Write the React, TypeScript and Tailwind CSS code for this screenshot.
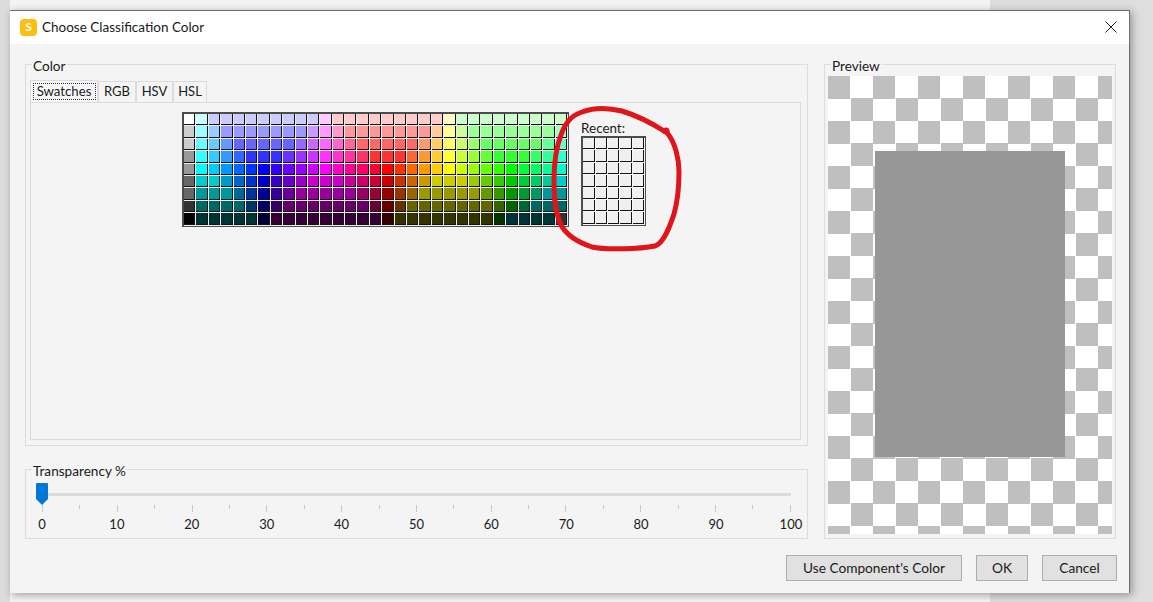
import React from "react";

const ROWS = [
  "555 455 445 445 445 445 445 445 445 445 445 545 544 544 544 544 544 544 544 544 544 554 454 454 454 454 454 454 454 454 454",
  "444 355 345 335 335 335 335 335 335 335 435 535 534 533 533 533 533 533 533 533 543 553 453 353 353 353 353 353 353 353 354",
  "444 255 245 235 225 225 225 225 225 325 425 525 524 523 522 522 522 522 522 532 542 552 452 352 252 252 252 252 252 253 254",
  "333 155 145 135 125 115 115 115 215 315 415 515 514 513 512 511 511 511 521 531 541 551 451 351 251 151 151 151 152 153 154",
  "333 055 045 035 025 015 005 105 205 305 405 505 504 503 502 501 500 510 520 530 540 550 450 350 250 150 050 051 052 053 054",
  "222 044 044 034 024 014 004 104 204 304 404 404 404 403 402 401 400 410 420 430 440 440 440 340 240 140 040 041 042 043 044",
  "222 033 033 033 023 013 003 103 203 303 303 303 303 303 302 301 300 310 320 330 330 330 330 330 230 130 030 031 032 033 033",
  "111 022 022 022 022 012 002 102 202 202 202 202 202 202 202 201 200 210 220 220 220 220 220 220 220 120 020 021 022 022 022",
  "000 011 011 011 011 011 001 101 101 101 101 101 101 101 101 101 100 110 110 110 110 110 110 110 110 010 011 011 011 011 111",
];

const toRgb = (code: string) =>
  `rgb(${Number(code[0]) * 51},${Number(code[1]) * 51},${Number(code[2]) * 51})`;

const FONT = "font-['Lato','Noto_Sans',sans-serif]";

function Swatch({ color }: { color: string }) {
  return (
    <div className="pr-px pb-px">
      <div className="h-full w-full border-r border-b border-[#141414]" style={{ backgroundColor: color }} />
    </div>
  );
}

function Group({ title, className, children }: { title: string; className: string; children: React.ReactNode }) {
  return (
    <div className={`relative border border-[#dcdcdc] ${className}`}>
      <span className="absolute left-[6px] top-[-8px] bg-[#f4f4f4] px-px text-[13.6px] leading-[18px] text-[#1a1a1a]">
        {title}
      </span>
      {children}
    </div>
  );
}

function Tab({ label, w }: { label: string; w: string }) {
  return (
    <div className={`mt-px flex h-[21px] items-center justify-center border border-b-0 border-[#dcdcdc] text-[13px] text-[#1a1a1a] ${w}`}>
      {label}
    </div>
  );
}

function DialogButton({ label, w }: { label: string; w: string }) {
  return (
    <button className={`h-[26px] border border-[#adadad] bg-[#e1e1e1] text-[13.7px] leading-none text-[#1a1a1a] ${w}`}>
      {label}
    </button>
  );
}

const TICKS = Array.from({ length: 21 }, (_, i) => i);
const LABELS = Array.from({ length: 11 }, (_, i) => i * 10);

export default function App() {
  return (
    <div className={`relative flex h-[602px] w-[1153px] overflow-hidden bg-[#dedede] ${FONT}`}>
      <div className="w-[10px] bg-[#dcdcdc]" />
      <div className="w-[980px] bg-[#f3f3f3]" />

      <div className="absolute left-[10px] top-[10px] flex h-[583px] w-[1120px] flex-col border-t border-r border-[#6f6f6f] bg-[#f4f4f4] shadow-[2px_2px_8px_rgba(0,0,0,0.35)]">
        {/* Title bar */}
        <div className="flex h-[33px] shrink-0 items-center bg-white pb-[1px] pl-[10px] pr-[12px]">
          <div className="flex h-[17px] w-[17px] items-center justify-center rounded-[4px] bg-[#fdbd13] text-[12px] font-bold leading-none text-white">
            S
          </div>
          <span className="ml-[5px] text-[13.5px] text-[#1a1a1a]">Choose Classification Color</span>
          <svg className="ml-auto" width="12" height="12" viewBox="0 0 12 12" fill="none" stroke="#222" strokeWidth="1">
            <path d="M0.5 0.5 L11.5 11.5 M11.5 0.5 L0.5 11.5" />
          </svg>
        </div>

        {/* Body */}
        <div className="flex flex-1 flex-col pl-[15px] pr-[12px] pt-[20px]">
          <div className="flex gap-[16px]">
            <div className="flex w-[783px] flex-col gap-[23px]">
              <Group title="Color" className="flex h-[382px] flex-col pb-[5px] pl-[4px] pr-[6px] pt-[15px]">
                <div className="flex h-[22px] shrink-0">
                  <div className="flex h-[22px] w-[68px] items-center justify-center border border-b-0 border-[#dcdcdc] bg-[#f8f8f8] text-[13.2px] text-[#1a1a1a]">
                    <span className="flex h-[17px] w-[63px] items-center justify-center border border-dotted border-[#333]">Swatches</span>
                  </div>
                  <Tab label="RGB" w="w-[38px]" />
                  <Tab label="HSV" w="w-[37px]" />
                  <Tab label="HSL" w="w-[34px]" />
                </div>
                <div className="flex flex-1 items-start gap-[12px] border border-[#dcdcdc] pl-[151px] pt-[9px]">
                  <div className="grid grid-cols-[repeat(31,12.4px)] grid-rows-[repeat(9,12.4px)] border-t-2 border-r border-b border-l-2 border-[#4c4c4c] bg-[#ececec]">
                    {ROWS.flatMap((row, r) =>
                      row.split(" ").map((code, c) => <Swatch key={`${r}-${c}`} color={toRgb(code)} />),
                    )}
                  </div>
                  <div className="flex flex-col">
                    <span className="h-[24px] pt-[7px] text-[13.4px] leading-[18px] text-[#1a1a1a]">Recent:</span>
                    <div className="grid grid-cols-[repeat(5,12.4px)] grid-rows-[repeat(7,12.4px)] border-t-2 border-r border-b border-l-2 border-[#4c4c4c] bg-[#f8f8f8]">
                      {Array.from({ length: 35 }, (_, i) => (
                        <Swatch key={i} color="#f0f0f0" />
                      ))}
                    </div>
                  </div>
                </div>
              </Group>

              <Group title="Transparency %" className="h-[70px] pl-[16px] pt-[13px]">
                <div className="relative h-[22px] w-[749px]">
                  <div className="absolute left-0 right-0 top-[10px] h-[3px] bg-[#dcdcdc]" />
                  <svg className="absolute left-[-6px] top-0" width="12" height="22" viewBox="0 0 12 22">
                    <path d="M0 1 Q0 0 1 0 H11 Q12 0 12 1 V16 L6 22 L0 16 Z" fill="#0078d7" />
                  </svg>
                </div>
                <div className="flex h-[7px] w-[749px] justify-between">
                  {TICKS.map((t) => (
                    <div key={t} className={`w-px bg-[#c8c8c8] ${t % 2 === 0 ? "h-[7px]" : "h-[4px]"}`} />
                  ))}
                </div>
                <div className="mt-[3px] flex w-[749px] justify-between">
                  {LABELS.map((l) => (
                    <div key={l} className="flex w-0 justify-center whitespace-nowrap text-[13px] leading-[18px] text-[#1a1a1a]">
                      {l}
                    </div>
                  ))}
                </div>
              </Group>
            </div>

            <Group title="Preview" className="h-[475px] w-[292px] pb-[4px] pl-[3px] pr-[3px] pt-[11px]">
              <div className="flex h-full w-full items-center justify-center bg-[repeating-conic-gradient(#ffffff_0_25%,#bfbfbf_0_50%)] bg-[length:45px_45px] pb-[2px]">
                <div className="h-[306px] w-[190px] bg-[#979797]" />
              </div>
            </Group>
          </div>

          <div className="mt-[16px] flex justify-end gap-[14px]">
            <DialogButton label="Use Component's Color" w="w-[176px]" />
            <DialogButton label="OK" w="w-[52px]" />
            <DialogButton label="Cancel" w="w-[75px]" />
          </div>
        </div>

        {/* Hand-drawn annotation */}
        <svg className="pointer-events-none absolute left-[-10px] top-[-11px]" width="1153" height="602" viewBox="0 0 1153 602" fill="none">
          <path
            d="M664 131 C650 122 638 116 622 111 C610 108 595 107 582 112 C570 116 565 124 561 135 C556 148 554 165 554 180 C554 198 555 212 561 225 C567 236 580 243 592 247 C605 250 640 249 655 246 C664 243 670 226 674 214 C678 200 679 185 679 172 C679 158 675 143 668 134 C666 131 664 131 664 131"
            stroke="#e0151c"
            strokeWidth="5"
            strokeLinecap="round"
            strokeLinejoin="round"
          />
          <circle cx="666" cy="131" r="3.5" fill="#e0151c" />
        </svg>
      </div>
    </div>
  );
}
